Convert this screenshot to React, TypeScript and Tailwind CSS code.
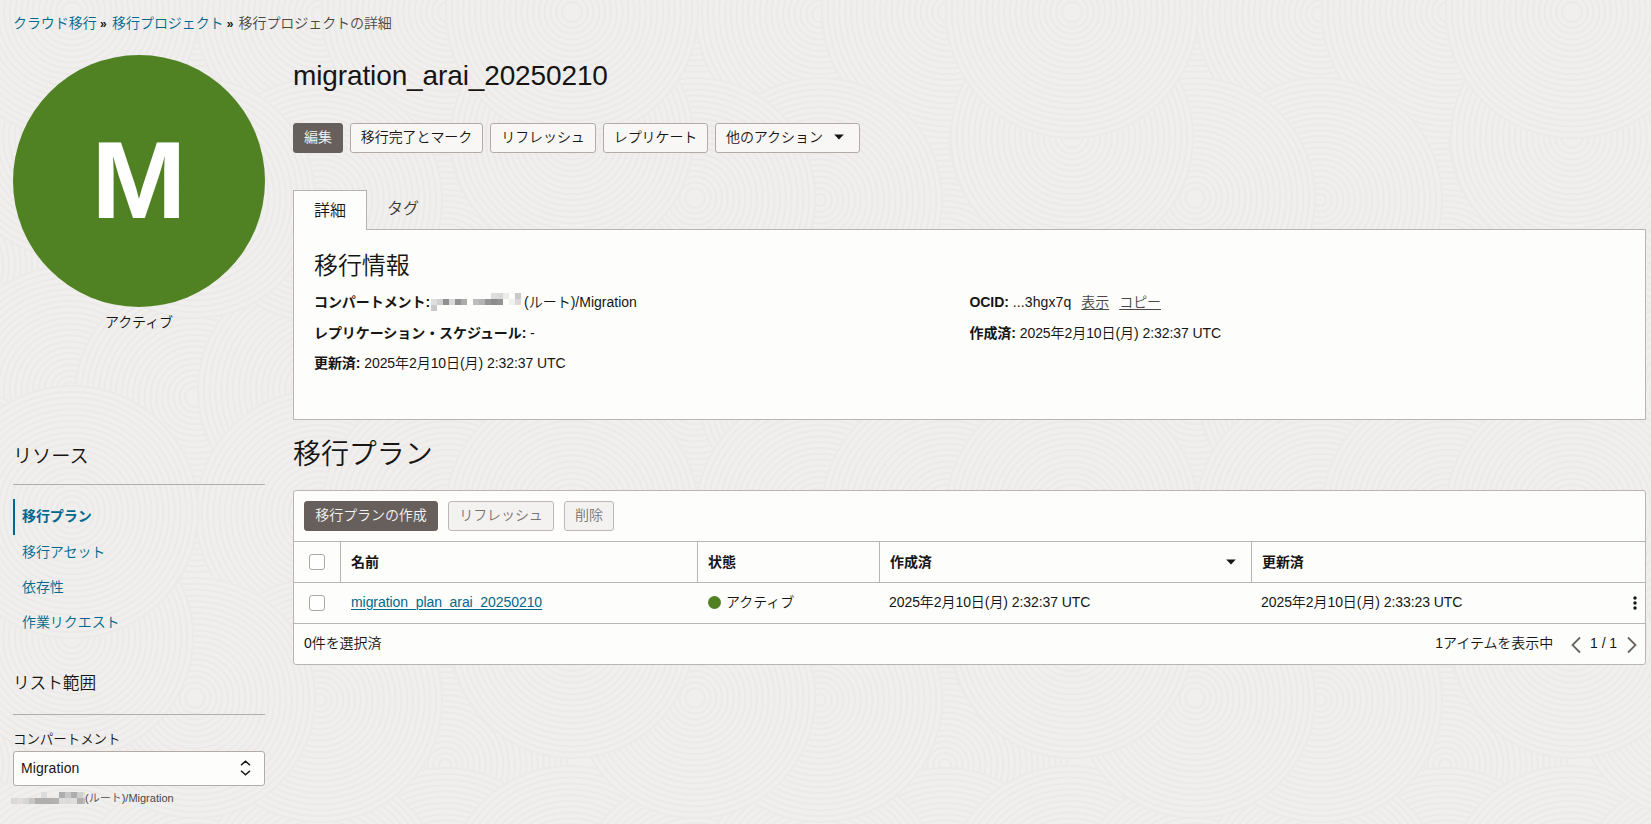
import type { ReactNode } from "react";

const resources = ["移行アセット", "依存性", "作業リクエスト"];

// ring discs inside one 500px background tile, painted in order
const TILE = 500;
const discs = [
  [445, 265, 122],
  [320, 330, 122],
  [195, 450, 122],
  [445, 390, 122],
  [320, 450, 122],
  [70, 390, 124],
  [195, 397, 120],
  [320, 390, 122],
  [320, 14, 124],
  [70, 135, 121],
  [72, 12, 126],
  [448, 12, 126],
  [320, 200, 122],
  [195, 198, 120],
  [72, 137, 121],
  [72, 12, 126],
] as const;

const wrapped = discs.flatMap(([cx, cy, r]) =>
  [-TILE, 0, TILE].flatMap((dx) =>
    [-TILE, 0, TILE]
      .map((dy) => ({ x: cx + dx, y: cy + dy, r }))
      .filter((d) => d.x + r > 0 && d.x - r < TILE && d.y + r > 0 && d.y - r < TILE)
  )
);

// pixelated blocks that hide the tenancy name: [column, row, colour]
const maskDetail = [
  [0, 1, "#dedede"], [1, 1, "#cfcfcf"], [2, 1, "#8f8f8f"], [3, 1, "#d8d8d8"], [4, 1, "#929292"],
  [5, 1, "#ababab"], [7, 1, "#bcbcbc"], [8, 1, "#b4b4b4"], [9, 1, "#959595"], [10, 1, "#8c8c8c"],
  [11, 1, "#939393"], [13, 1, "#f1f1f1"], [14, 1, "#dadada"], [10, 0, "#dedede"], [11, 0, "#d9d9d9"],
  [12, 0, "#ececec"], [14, 0, "#c9c9c9"], [0, 2, "#c9c9c9"],
] as const;
const maskScope = [
  [0, 1, "#d9d9d9"], [1, 1, "#dedede"], [2, 1, "#d6d6d6"], [3, 1, "#c6c6c6"], [4, 1, "#afafaf"],
  [5, 1, "#afafaf"], [6, 1, "#afafaf"], [7, 1, "#b2b2b2"], [8, 1, "#dcdcdc"], [9, 1, "#dadada"],
  [10, 1, "#dedede"], [11, 1, "#b0b0b0"], [5, 0, "#dcdcdc"], [8, 0, "#adadad"], [9, 0, "#c6c6c6"],
  [10, 0, "#adadad"], [11, 0, "#cfcfcf"], [12, 0, "#dedede"], [12, 1, "#bdbdbd"],
] as const;

function Mask({ cells, width, height }: { cells: readonly (readonly [number, number, string])[]; width: number; height: number }) {
  return (
    <svg width={width} height={height} className="shrink-0" shapeRendering="crispEdges">
      {cells.map(([x, y, fill]) => (
        <rect key={`${x}-${y}`} x={x * 6} y={y * 6} width="6" height="6" fill={fill} />
      ))}
    </svg>
  );
}

function Backdrop() {
  return (
    <svg className="absolute inset-0 h-full w-full" aria-hidden="true">
      <defs>
        <pattern id="rings" width={TILE} height={TILE} patternUnits="userSpaceOnUse">
          <rect width={TILE} height={TILE} fill="#f0efed" />
          {wrapped.map(({ x, y, r }, n) => (
            <g key={n} fill="#f0efed" stroke="#ebeae8" strokeWidth="2">
              {Array.from({ length: Math.floor(r / 5.8) }, (_, i) => (
                <circle key={i} cx={x} cy={y} r={r - i * 5.8} />
              ))}
            </g>
          ))}
        </pattern>
      </defs>
      <rect width="100%" height="100%" fill="url(#rings)" />
    </svg>
  );
}

function Button({ children, className }: { children: ReactNode; className: string }) {
  return (
    <button className={`flex h-[30px] shrink-0 items-center rounded-[3px] border pb-0.5 text-sm ${className}`}>
      {children}
    </button>
  );
}

function Field({ label, children }: { label: string; children: ReactNode }) {
  return (
    <div className="flex h-[30.5px] items-center whitespace-pre">
      <span className="font-bold">{label}:</span>
      {children}
    </div>
  );
}

function Checkbox() {
  return <span className="block size-4 rounded-[3px] border border-[#aea8a3] bg-white" />;
}

function Caret() {
  return (
    <svg width="10" height="6" viewBox="0 0 10 6">
      <path d="M0.2 0.4h9.6L5 5.6z" fill="#161513" />
    </svg>
  );
}

function Chevron({ d }: { d: string }) {
  return (
    <svg width="10" height="18" viewBox="0 0 10 18" fill="none" stroke="#6b6560" strokeWidth="1.8" className="mt-0.5">
      <path d={d} />
    </svg>
  );
}

function Sidebar() {
  return (
    <aside className="w-[252px] shrink-0">
      <div className="flex size-[252px] items-center justify-center rounded-full bg-[#508223] pb-0.5">
        <span className="scale-x-[1.04] text-[110px] leading-none font-bold text-white">M</span>
      </div>
      <p className="mt-[5px] text-center text-sm leading-5">アクティブ</p>

      <h2 className="mt-[111px] h-[41px] text-[19.2px] leading-7">リソース</h2>
      <nav className="border-t border-[#b3aea8] pt-[14px] text-sm text-[#00688c]">
        <a className="flex h-9 items-center border-l-2 border-[#00688c] pb-0.5 pl-[7px] font-bold">移行プラン</a>
        {resources.map((name) => (
          <a key={name} className="flex h-[35.3px] items-center pb-0.5 pl-[9px]">{name}</a>
        ))}
      </nav>

      <h2 className="mt-[29px] h-[44px] text-[16.7px] leading-7">リスト範囲</h2>
      <div className="border-t border-[#b3aea8] pt-[14px]">
        <p className="text-[13.5px] leading-[22px]">コンパートメント</p>
        <div className="flex h-[35px] items-center justify-between rounded-[3px] border border-[#b5aba6] bg-[#fdfdfb] pr-[13px] pl-[7px] text-sm tracking-[0.1px]">
          Migration
          <svg width="11" height="16" viewBox="0 0 11 16" fill="none" stroke="#161513" strokeWidth="1.5">
            <path d="M1 5.2 5.5 1.2 10 5.2M1 10.8 5.5 14.8 10 10.8" />
          </svg>
        </div>
        <div className="-ml-[2px] flex h-6 items-center text-[11px] tracking-normal text-[#4c4845]">
          <Mask cells={maskScope} width={74} height={12} />
          (ルート)/Migration
        </div>
      </div>
    </aside>
  );
}

function Details() {
  return (
    <section>
      <div className="flex text-base">
        <div className="z-10 -mb-px flex h-10 w-[74px] items-center justify-center border border-b-0 border-[#b8b2ad] bg-[#fdfdfb]">詳細</div>
        <div className="px-5 pt-[7px] text-[#3a3632]">タグ</div>
      </div>
      <div className="h-[191px] border border-[#b8b5b2] bg-[#fdfdfb] px-5 pt-[18px] text-sm">
        <h2 className="mb-[3px] text-2xl leading-9">移行情報</h2>
        <div className="grid grid-cols-2">
          <div>
            <Field label="コンパートメント">
              <span className="w-px" />
              <Mask cells={maskDetail} width={93} height={18} />
              <span className="tracking-normal">(ルート)/Migration</span>
            </Field>
            <Field label="レプリケーション・スケジュール"> -</Field>
            <Field label="更新済"> 2025年2月10日(月) 2:32:37 UTC</Field>
          </div>
          <div>
            <Field label="OCID">
              <span className="tracking-[0.1px]"> ...3hgx7q</span>
              <a className="ml-2.5 text-[#4c4845] underline underline-offset-2">表示</a>
              <a className="ml-2.5 text-[#4c4845] underline underline-offset-2">コピー</a>
            </Field>
            <Field label="作成済"> 2025年2月10日(月) 2:32:37 UTC</Field>
          </div>
        </div>
      </div>
    </section>
  );
}

function PlansTable() {
  return (
    <div className="rounded-[3px] border border-[#b8b5b2] bg-[#fdfdfb] text-sm">
      <div className="flex h-[50px] items-center gap-2.5 px-2.5">
        <Button className="w-[134px] justify-center border-[#665f5b] bg-[#665f5b] text-[#f5f4f2]">移行プランの作成</Button>
        <Button className="w-[106px] justify-center border-[#bdb8b3] bg-[#f3f2f0] text-[#777370]">リフレッシュ</Button>
        <Button className="w-[50px] justify-center border-[#bdb8b3] bg-[#f3f2f0] text-[#777370]">削除</Button>
      </div>
      <div className="grid h-[41px] grid-cols-[46px_357px_182px_372px_1fr] border-t border-[#b8b5b2] font-bold">
        <div className="flex items-center pl-[15px]"><Checkbox /></div>
        <div className="flex items-center border-l border-[#b8b5b2] pl-2.5">名前</div>
        <div className="flex items-center border-l border-[#b8b5b2] pl-2.5">状態</div>
        <div className="flex items-center justify-between border-l border-[#b8b5b2] pr-[15px] pl-2.5">
          作成済
          <Caret />
        </div>
        <div className="flex items-center border-l border-[#b8b5b2] pl-2.5">更新済</div>
      </div>
      <div className="grid h-[41px] grid-cols-[46px_357px_182px_372px_1fr] items-center border-t border-[#b8b5b2]">
        <div className="pl-[15px]"><Checkbox /></div>
        <a className="pb-0.5 pl-[11px] text-[#00688c] underline underline-offset-2">migration_plan_arai_20250210</a>
        <div className="flex items-center gap-[5px] pb-0.5 pl-[11px]">
          <span className="size-[13px] rounded-full bg-[#508223]" />
          アクティブ
        </div>
        <div className="pb-0.5 pl-2.5">2025年2月10日(月) 2:32:37 UTC</div>
        <div className="flex items-center justify-between pr-2 pl-2.5">
          <span className="pb-0.5">2025年2月10日(月) 2:33:23 UTC</span>
          <svg width="4" height="14" viewBox="0 0 4 14" fill="#161513">
            <circle cx="2" cy="2" r="1.7" />
            <circle cx="2" cy="7" r="1.7" />
            <circle cx="2" cy="12" r="1.7" />
          </svg>
        </div>
      </div>
      <div className="flex h-[41px] items-center border-t border-[#b8b5b2] pr-2 pl-2.5">
        <span className="flex-1 pb-0.5">0件を選択済</span>
        <span className="mr-[18px] pb-0.5">1アイテムを表示中</span>
        <Chevron d="M9 1.5 1.5 9 9 16.5" />
        <span className="mr-2.5 ml-[9px] pb-0.5">1 / 1</span>
        <Chevron d="M1 1.5 8.5 9 1 16.5" />
      </div>
    </div>
  );
}

export default function App() {
  return (
    <div className="relative h-[824px] w-[1651px] overflow-hidden bg-[#f0efed] font-['Liberation_Sans','Noto_Sans_CJK_JP',sans-serif] font-[350] tracking-[-0.07px] text-[#161513]">
      <Backdrop />
      <div className="relative pl-[13px]">
        <div className="flex h-[55px] items-center pb-[9px] text-sm whitespace-pre">
          <a className="text-[#00688c]">クラウド移行</a>
          <span className="w-[15.5px] pt-[3px] pr-0.5 text-center text-[12px] font-bold">»</span>
          <a className="text-[#00688c]">移行プロジェクト</a>
          <span className="w-[15px] pt-[3px] pr-0.5 text-center text-[12px] font-bold">»</span>
          <span className="text-[#4c4845]">移行プロジェクトの詳細</span>
        </div>
        <div className="flex gap-7">
          <Sidebar />
          <main className="w-[1353px] shrink-0">
            <h1 className="h-[68px] text-[28px] leading-[42px] tracking-[-0.12px]">migration_arai_20250210</h1>
            <div className="mb-[37px] flex gap-[7px]">
              <Button className="w-[50px] justify-center border-[#665f5b] bg-[#665f5b] text-[#f5f4f2]">編集</Button>
              <Button className="w-[133px] justify-center border-[#b5aba6] bg-[#f8f7f5]">移行完了とマーク</Button>
              <Button className="w-[106px] justify-center border-[#b5aba6] bg-[#f8f7f5]">リフレッシュ</Button>
              <Button className="w-[105px] justify-center border-[#b5aba6] bg-[#f8f7f5]">レプリケート</Button>
              <Button className="w-[145px] gap-[11px] border-[#b5aba6] bg-[#f8f7f5] pl-2.5">
                他のアクション
                <Caret />
              </Button>
            </div>
            <Details />
            <h2 className="h-[70px] pt-3.5 text-[28px] leading-[42px]">移行プラン</h2>
            <PlansTable />
          </main>
        </div>
      </div>
    </div>
  );
}
